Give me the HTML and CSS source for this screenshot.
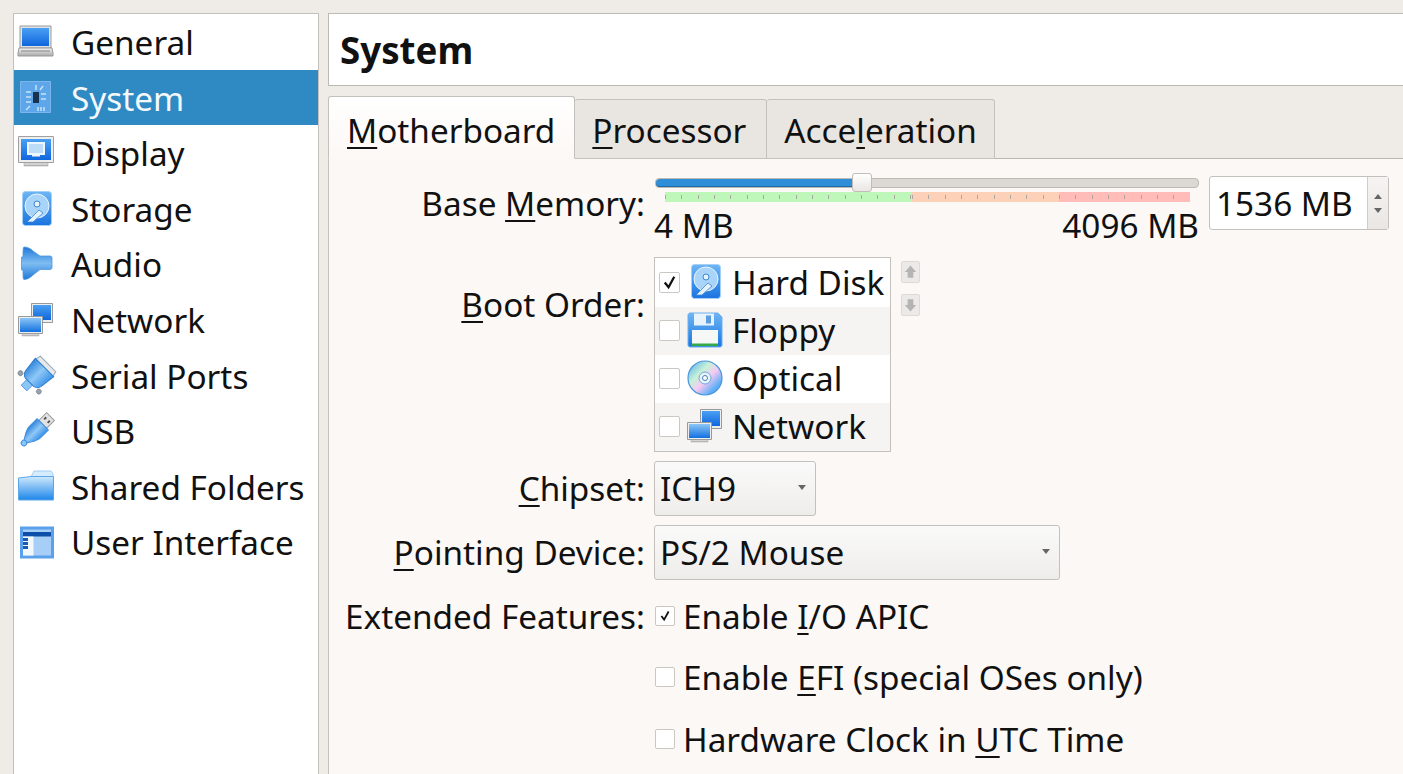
FILE: index.html
```html
<!DOCTYPE html>
<html lang="en">
<head>
    <meta charset="UTF-8">
    <meta name="viewport" content="width=device-width, initial-scale=1.0">
    <title>System Settings</title>
    <link rel="stylesheet" href="styles.css">
</head>
<body>

    <!-- shared icon drawings -->
    <svg class="icon-defs" aria-hidden="true">
        <defs>
            <linearGradient id="blue" x1="0" y1="0" x2="0" y2="1">
                <stop offset="0" stop-color="#8cc6f7"/>
                <stop offset="1" stop-color="#1270e0"/>
            </linearGradient>
            <linearGradient id="blue-dark" x1="0" y1="0" x2="0" y2="1">
                <stop offset="0" stop-color="#4aa0f2"/>
                <stop offset="1" stop-color="#0f66de"/>
            </linearGradient>
            <linearGradient id="blue-side" x1="0" y1="0" x2="1" y2="0">
                <stop offset="0" stop-color="#2f86dc"/>
                <stop offset="0.5" stop-color="#8fc8f6"/>
                <stop offset="1" stop-color="#3a92ea"/>
            </linearGradient>
            <linearGradient id="blue-band" x1="0" y1="0" x2="0" y2="1">
                <stop offset="0" stop-color="#1f78d8"/>
                <stop offset="0.5" stop-color="#7fbdf2"/>
                <stop offset="1" stop-color="#1f78d8"/>
            </linearGradient>
            <linearGradient id="folder" x1="0" y1="0" x2="0" y2="1">
                <stop offset="0" stop-color="#cfe9fc"/>
                <stop offset="1" stop-color="#1d86ea"/>
            </linearGradient>
            <linearGradient id="silver" x1="0" y1="0" x2="0" y2="1">
                <stop offset="0" stop-color="#f4f4f4"/>
                <stop offset="1" stop-color="#a8a8a8"/>
            </linearGradient>
            <linearGradient id="disk-case" x1="0" y1="0" x2="0" y2="1">
                <stop offset="0" stop-color="#6db6f5"/>
                <stop offset="1" stop-color="#1a74e0"/>
            </linearGradient>
            <linearGradient id="disc" x1="0" y1="0" x2="1" y2="1">
                <stop offset="0" stop-color="#4da6f5"/>
                <stop offset="0.35" stop-color="#c6f2d6"/>
                <stop offset="0.55" stop-color="#f6c9f2"/>
                <stop offset="0.8" stop-color="#5aaef6"/>
            </linearGradient>

            <symbol id="i-general" viewBox="0 0 36 36">
                <path d="M2 2h31v22H2z" fill="#dfe3e6" stroke="#9a9a9a"/>
                <path d="M4 4h27v18H4z" fill="url(#blue-dark)"/>
                <path d="M1 24h33l1 5v3H0v-3z" fill="url(#silver)" stroke="#999"/>
                <path d="M3 27h29" stroke="#888"/>
            </symbol>
            <symbol id="i-system" viewBox="0 0 36 36">
                <path d="M2.500 1.500h30v31h-30z" fill="#5ea6ea" stroke="#7cb6ec"/>
                <path d="M15 12h6v11h-6z" fill="#19324f"/>
                <path d="M8 12h5M8 17h5M8 22h5M23 14h5M23 19h5M18 5v5M25 6l-3 4M8 30l4-4M20 27v4M23 27v4M26 27v4" stroke="#c7e2f8" stroke-width="1.500" fill="none"/>
            </symbol>
            <symbol id="i-display" viewBox="0 0 36 36">
                <path d="M.500 1.500h35v26H.500z" fill="#eee" stroke="#a0a0a0"/>
                <path d="M3 4h30v21H3z" fill="url(#blue-dark)"/>
                <path d="M10 8h16v11H10z" fill="#bcdcf8" stroke="#eef6fd" stroke-width="2"/>
                <path d="M14 20.500h8" stroke="#eef6fd" stroke-width="2"/>
                <path d="M6 28h24v3H6z" fill="url(#silver)" stroke="#aaa" stroke-width=".6"/>
            </symbol>
            <symbol id="i-disk" viewBox="0 0 36 36">
                <rect x="4.500" y=".5" width="29" height="34" rx="3" fill="url(#disk-case)" stroke="#a6d0f4"/>
                <circle cx="19" cy="15" r="12" fill="#a7d4f8" stroke="#e8f4fd"/>
                <circle cx="19" cy="13" r="3" fill="#e4f2fc" stroke="#3d85d0"/>
                <path d="M9 31l12-12 4 3-10 9z" fill="#e4f2fc" stroke="#3d85d0" stroke-width=".8"/>
            </symbol>
            <symbol id="i-audio" viewBox="0 0 36 36">
                <path d="M6 1C9 1 12 2 15 5l7 5h10c1.500 0 2 1 2 2v9c0 2-1 2.500-2 2.500H22L15 29c-3 3-6 4.500-9 4.500-1 0-1-3.500-1-9.500H3.500V11H5C5 5 5 1 6 1z" fill="url(#blue-band)" stroke="#4b97e2" stroke-width=".8"/>
            </symbol>
            <symbol id="i-network" viewBox="0 0 36 36">
                <path d="M13.500 1.500h21v19h-21z" fill="#eee" stroke="#999"/>
                <path d="M15 3h18v15H15z" fill="url(#blue-dark)"/>
                <path d="M.500 14.500h24v17H.500z" fill="#eee" stroke="#999"/>
                <path d="M2 16h21v14H2z" fill="url(#blue)"/>
                <path d="M4 32h17v2H4z" fill="url(#silver)" stroke="#aaa" stroke-width=".5"/>
            </symbol>
            <symbol id="i-serial" viewBox="0 0 36 36">
                <g transform="rotate(45 18 18)">
                    <path d="M7 1h22l1 5H6z" fill="#e8e8e8" stroke="#8fa6bc"/>
                    <path d="M14 26h8v9h-8z" fill="#8cc6f7" stroke="#3f8ede" stroke-width=".8"/>
                    <path d="M5 6h26l-2 16q-1 4-5 5H12q-4-1-5-5z" fill="url(#blue-side)" stroke="#2f7fd0"/>
                    <circle cx="5" cy="27" r="2.500" fill="#98a2ab" stroke="#6d7780" stroke-width=".6"/>
                    <circle cx="31" cy="27" r="2.500" fill="#98a2ab" stroke="#6d7780" stroke-width=".6"/>
                </g>
            </symbol>
            <symbol id="i-usb" viewBox="0 0 36 36">
                <g transform="rotate(45 18 18)">
                    <path d="M12.500 -2.500h11v11h-11z" fill="#e2e2e2" stroke="#999"/>
                    <path d="M14.500 1h2v3h-2zM19.500 1h2v3h-2z" fill="#555"/>
                    <path d="M10 8.500h16V19c0 6-4 10-6 14h-4c-2-4-6-8-6-14z" fill="url(#blue-side)" stroke="#3f8ede"/>
                    <circle cx="18" cy="35" r="2.800" fill="#8cc6f7" stroke="#3f8ede"/>
                </g>
            </symbol>
            <symbol id="i-folder" viewBox="0 0 36 36">
                <path d="M13 8l3-6h17l2 3v4z" fill="#d6ebfb" stroke="#a2cdf0"/>
                <path d="M.500 9L13 7.500h22.500V31H.500z" fill="url(#folder)" stroke="#5aa8ea"/>
            </symbol>
            <symbol id="i-ui" viewBox="0 0 36 36">
                <path d="M3.500 4h31v29h-31z" fill="#a7cef6" stroke="#5aa0ea" stroke-width="3"/>
                <path d="M5 8h28v4.500H5z" fill="#0d4fa8"/>
                <path d="M5 12.500h10.500V31.500H5z" fill="#f3f8fd"/>
                <path d="M5 14h5v3H5zM5 18h5v3H5zM5 22h5v3H5z" fill="#1a5cb4"/>
            </symbol>
            <symbol id="i-floppy" viewBox="0 0 36 36">
                <path d="M1 3c0-1 1-2 2-2h28l4 4v28c0 1-1 2-2 2H3c-1 0-2-1-2-2z" fill="url(#disk-case)" stroke="#6fb0ec"/>
                <path d="M7 1.500h20v12H7z" fill="#e8f2fb"/>
                <path d="M19 3.500h5v8h-5z" fill="#5b9ddd"/>
                <path d="M5 18h26v16H5z" fill="#f6f8f6"/>
                <path d="M5 31.500h26V34H5z" fill="#35a84a"/>
            </symbol>
            <symbol id="i-optical" viewBox="0 0 36 36">
                <circle cx="18" cy="18" r="17" fill="url(#disc)" stroke="#4b95dc" stroke-width="1.200"/>
                <circle cx="18" cy="18" r="6" fill="#e8f2fb" stroke="#6fa8dc"/>
                <circle cx="18" cy="18" r="2.500" fill="#fff" stroke="#4b7fb5"/>
            </symbol>
        </defs>
    </svg>

    <div class="window">

        <ul class="sidebar">
            <li class="nav-item"><svg class="icon"><use href="#i-general"/></svg>General</li>
            <li class="nav-item active"><svg class="icon"><use href="#i-system"/></svg>System</li>
            <li class="nav-item"><svg class="icon"><use href="#i-display"/></svg>Display</li>
            <li class="nav-item"><svg class="icon"><use href="#i-disk"/></svg>Storage</li>
            <li class="nav-item"><svg class="icon"><use href="#i-audio"/></svg>Audio</li>
            <li class="nav-item"><svg class="icon"><use href="#i-network"/></svg>Network</li>
            <li class="nav-item"><svg class="icon"><use href="#i-serial"/></svg>Serial Ports</li>
            <li class="nav-item"><svg class="icon"><use href="#i-usb"/></svg>USB</li>
            <li class="nav-item"><svg class="icon"><use href="#i-folder"/></svg>Shared Folders</li>
            <li class="nav-item"><svg class="icon"><use href="#i-ui"/></svg>User Interface</li>
        </ul>

        <div class="main">
            <h1 class="page-title">System</h1>

            <div class="tabs">
                <div class="tab active"><u>M</u>otherboard</div>
                <div class="tab"><u>P</u>rocessor</div>
                <div class="tab">Acce<u>l</u>eration</div>
            </div>

            <div class="panel">
                <label class="field-label memory-label">Base <u>M</u>emory:</label>
                <div class="memory-row">
                    <div class="slider-wrap">
                        <div class="slider">
                            <div class="slider-fill"></div>
                            <div class="slider-handle"></div>
                        </div>
                        <div class="scale">
                            <div class="scale-part green"></div>
                            <div class="scale-part orange"></div>
                            <div class="scale-part red"></div>
                        </div>
                        <div class="scale-labels"><span>4 MB</span><span>4096 MB</span></div>
                    </div>
                    <div class="spinbox">
                        <div class="spin-value">1536 MB</div>
                        <div class="spin-buttons">
                            <span class="arrow-up"></span>
                            <span class="arrow-down"></span>
                        </div>
                    </div>
                </div>

                <label class="field-label boot-label"><u>B</u>oot Order:</label>
                <div class="boot-row">
                    <ul class="boot-list">
                        <li class="boot-item"><span class="check checked"><svg viewBox="0 0 20 20"><path d="M5 10l4 5 6-11" fill="none" stroke="#111" stroke-width="2.400"/></svg></span><svg class="icon"><use href="#i-disk"/></svg>Hard Disk</li>
                        <li class="boot-item"><span class="check"></span><svg class="icon"><use href="#i-floppy"/></svg>Floppy</li>
                        <li class="boot-item"><span class="check"></span><svg class="icon"><use href="#i-optical"/></svg>Optical</li>
                        <li class="boot-item"><span class="check"></span><svg class="icon"><use href="#i-network"/></svg>Network</li>
                    </ul>
                    <div class="move-buttons">
                        <div class="move-btn"><svg viewBox="0 0 18 20"><path d="M9 3l6 7h-3v6H6v-6H3z" fill="#b4b4b4"/></svg></div>
                        <div class="move-btn"><svg viewBox="0 0 18 20"><path d="M9 17l6-7h-3V4H6v6H3z" fill="#b4b4b4"/></svg></div>
                    </div>
                </div>

                <label class="field-label"><u>C</u>hipset:</label>
                <div class="combo chipset"><span>ICH9</span><span class="combo-arrow"></span></div>

                <label class="field-label"><u>P</u>ointing Device:</label>
                <div class="combo pointing"><span>PS/2 Mouse</span><span class="combo-arrow"></span></div>

                <label class="field-label features-label">Extended Features:</label>
                <div class="features">
                    <div class="feature"><span class="check checked"><svg viewBox="0 0 20 20"><path d="M6 10l3 4 5-9" fill="none" stroke="#111" stroke-width="2"/></svg></span>Enable <u>I</u>/O APIC</div>
                    <div class="feature"><span class="check"></span>Enable <u>E</u>FI (special OSes only)</div>
                    <div class="feature"><span class="check"></span>Hardware Clock in <u>U</u>TC Time</div>
                </div>
            </div>
        </div>
    </div>

</body>
</html>
```

FILE: styles.css
```css
* {
    box-sizing: border-box;
    margin: 0;
    padding: 0;
}
html, body {
    height: 774px;
    overflow: hidden;
}
body {
    font-family: "Noto Sans", sans-serif;
    font-size: 33.3px;
    color: #111;
    background-color: #efebe7;
}
ul {
    list-style: none;
}
u {
    text-underline-offset: 4px;
    text-decoration-thickness: 2px;
}
symbol {
    overflow: visible;
}
.icon-defs {
    position: absolute;
    width: 0;
    height: 0;
}
.icon {
    width: 36px;
    height: 36px;
    flex: none;
    overflow: visible;
}
.window {
    display: flex;
    height: 100%;
    padding: 13px 0 0 13px;
}

/* left list */
.sidebar {
    width: 306px;
    flex: none;
    margin-right: 9px;
    height: 780px;
    background-color: white;
    border: 1px solid #c4c1bc;
}
.nav-item {
    display: flex;
    align-items: center;
    gap: 17px;
    height: 55.55px;
    padding: 1px 0 0 4px;
    white-space: nowrap;
}
.nav-item.active {
    background-color: #2f8ac4;
    color: #f4f8fb;
}

/* right side */
.main {
    flex: 1;
    min-width: 0;
    display: flex;
    flex-direction: column;
}
.page-title {
    height: 73px;
    margin-bottom: 10px;
    padding-left: 11px;
    font-size: 36.7px;
    line-height: 73px;
    font-weight: bold;
    color: #111;
    background-color: white;
    border: 1px solid #bdbab5;
    border-right: none;
}
.tabs {
    display: flex;
    align-items: flex-end;
    height: 63px;
    border-bottom: 1px solid #b9b6b1;
}
.tab {
    height: 60px;
    margin-bottom: -1px;
    padding: 0 20px 0 17px;
    line-height: 60px;
    white-space: nowrap;
    background-color: #e9e5e1;
    border: 1px solid #c4c1bc;
    border-left: none;
    border-radius: 3px 3px 0 0;
}
.tab:last-child {
    padding-right: 17px;
}
.tab.active {
    height: 63px;
    padding: 0 19px 0 18px;
    line-height: 66px;
    background: linear-gradient(#ffffff, #fcf8f5);
    border-left: 1px solid #c4c1bc;
    border-bottom-color: #fcf8f5;
}
.panel {
    flex: 1;
    display: grid;
    grid-template-columns: 316px 1fr;
    grid-template-rows: 76px 195px 55px 55px auto;
    column-gap: 9px;
    row-gap: 9px;
    align-content: start;
    padding-top: 13px;
    background-color: #fcf8f5;
    border-left: 1px solid #c4c1bc;
}
.field-label {
    align-self: center;
    padding-bottom: 2px;
    text-align: right;
    white-space: nowrap;
}
.memory-label {
    align-self: start;
    padding-top: 8px;
}
.boot-label {
    align-self: start;
    padding-top: 24px;
}
.features-label {
    align-self: start;
    padding-top: 4px;
}

/* memory slider */
.memory-row {
    display: flex;
    align-items: flex-start;
    gap: 10px;
    padding-right: 14px;
}
.slider-wrap {
    width: 545px;
    flex: none;
    position: relative;
}
.slider {
    position: relative;
    height: 10px;
    margin: 6px 0 0 1px;
    background-color: #dcd9d5;
    border: 1px solid #bdbab5;
    border-radius: 4px;
}
.slider-fill {
    width: 199px;
    height: 100%;
    background-color: #2e8fd8;
    border-radius: 4px 0 0 4px;
    box-shadow: inset 0 -1px 0 #1c6aa8;
}
.slider-handle {
    position: absolute;
    left: 196px;
    top: -6px;
    width: 20px;
    height: 19px;
    background: linear-gradient(#ffffff, #e9e6e3);
    border: 1px solid #c0bdb8;
    border-radius: 3px;
}
.scale {
    display: flex;
    height: 10px;
    margin: 4px 8px 0 11px;
}
.scale-part {
    background-image: repeating-linear-gradient(90deg, #a9a9a0 0, #a9a9a0 1px, transparent 1px, transparent 16.33px);
    background-size: 100% 4px;
    background-position: 0 3px;
    background-repeat: no-repeat;
}
.green {
    width: 247px;
    background-color: #bff6b9;
}
.orange {
    width: 147px;
    background-color: #fdd0b8;
}
.red {
    width: 131px;
    background-color: #ffbcb8;
}
.scale-labels {
    display: flex;
    justify-content: space-between;
    line-height: 44px;
    margin-top: 1px;
}
.spinbox {
    display: flex;
    width: 180px;
    height: 54px;
    margin-top: 4px;
    background-color: white;
    border: 1px solid #c4c1bc;
    border-radius: 3px;
}
.spin-value {
    flex: 1;
    padding-left: 6px;
    line-height: 52px;
    white-space: nowrap;
}
.spin-buttons {
    width: 21px;
    display: flex;
    flex-direction: column;
    align-items: center;
    justify-content: center;
    gap: 9px;
    background: linear-gradient(#f6f4f2, #e9e6e3);
    border-left: 1px solid #d0cdc8;
}
.arrow-up, .arrow-down, .combo-arrow {
    width: 0;
    height: 0;
    border-left: 4.500px solid transparent;
    border-right: 4.500px solid transparent;
}
.arrow-up {
    border-bottom: 5px solid #666;
}
.arrow-down, .combo-arrow {
    border-top: 5px solid #666;
}

/* boot order */
.boot-row {
    display: flex;
    gap: 10px;
}
.boot-list {
    width: 237px;
    height: 195px;
    padding: 1px 0;
    background-color: white;
    border: 1px solid #c4c1bc;
}
.boot-item {
    display: flex;
    align-items: center;
    height: 48px;
    padding: 0 0 2px 4px;
    white-space: nowrap;
}
.boot-item:nth-child(even) {
    background-color: #f5f4f3;
}
.boot-item .icon {
    margin: 0 9px 0 7px;
}
.check {
    width: 21px;
    height: 21px;
    flex: none;
    display: inline-block;
    background-color: white;
    border: 1px solid #cbc8c3;
    border-radius: 2px;
}
.check svg {
    display: block;
    width: 100%;
    height: 100%;
}
.move-buttons {
    display: flex;
    flex-direction: column;
    gap: 11px;
    padding-top: 4px;
}
.move-btn {
    width: 19px;
    height: 22px;
    background-color: #ece9e6;
    border: 1px solid #dedbd7;
    border-radius: 2px;
}
.move-btn svg {
    display: block;
    width: 100%;
    height: 100%;
}

/* combos */
.combo {
    display: flex;
    align-items: center;
    justify-content: space-between;
    height: 55px;
    padding: 0 9px 2px 5px;
    white-space: nowrap;
    background: linear-gradient(#fafafa, #efedea);
    border: 1px solid #c4c1bc;
    border-radius: 3px;
}
.chipset {
    width: 162px;
}
.pointing {
    width: 406px;
}

/* checkboxes */
.features {
    display: flex;
    flex-direction: column;
    gap: 6.500px;
}
.feature {
    display: flex;
    align-items: center;
    height: 55px;
    padding-bottom: 2px;
    white-space: pre;
}
.feature .check {
    width: 20px;
    height: 20px;
    margin: 0 8px 0 1px;
}
```
